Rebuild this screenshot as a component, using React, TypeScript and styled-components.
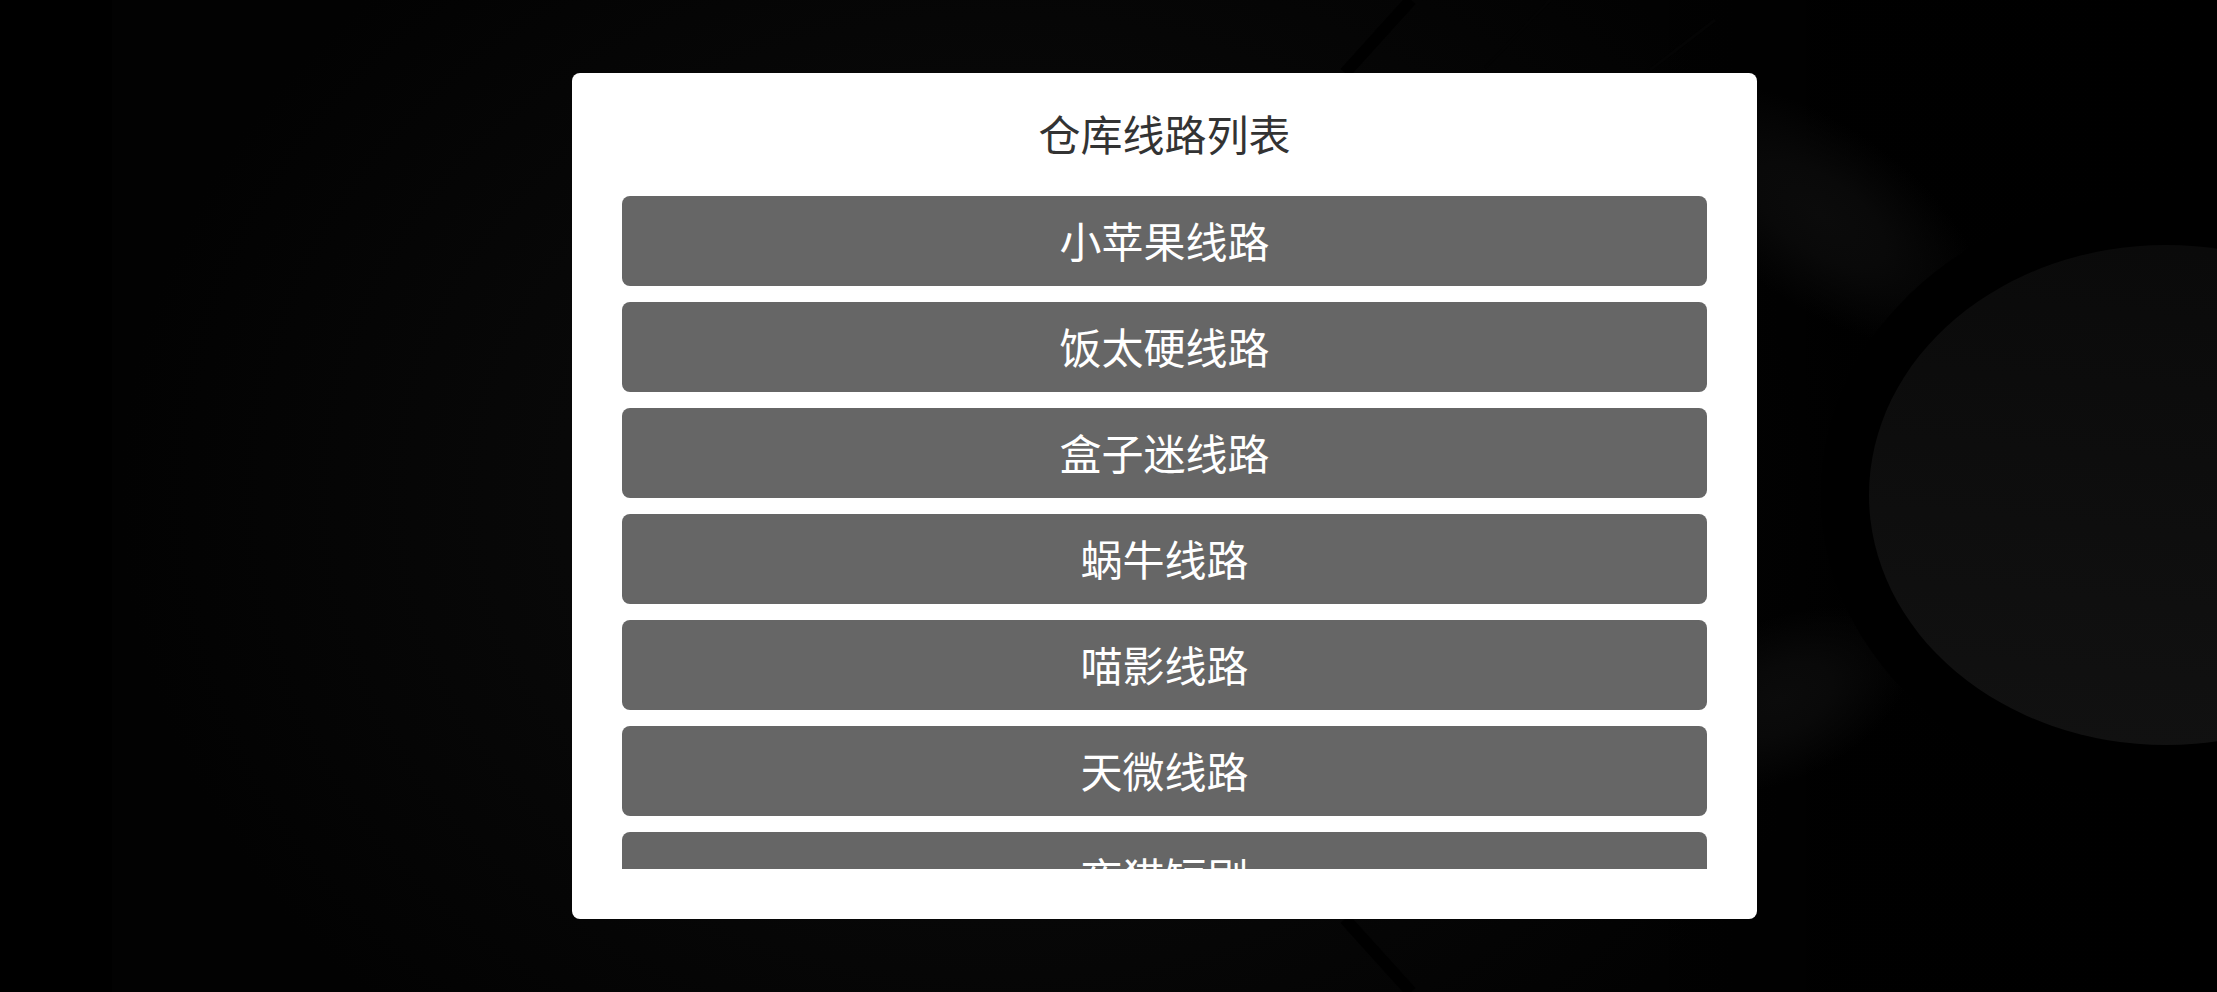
import styled, { createGlobalStyle } from "styled-components";

const lines = [
  "小苹果线路",
  "饭太硬线路",
  "盒子迷线路",
  "蜗牛线路",
  "喵影线路",
  "天微线路",
  "夜猫短剧",
];

const GlobalStyle = createGlobalStyle`
  * { box-sizing: border-box; margin: 0; }
  body {
    background: #000;
    font-family: "Noto Sans CJK SC", sans-serif;
    overflow: hidden;
  }
`;

const Screen = styled.main`
  position: relative;
  height: 100vh;
  padding: 73px 0 73px 112px;
  display: flex; justify-content: center;
`;

const Wallpaper = styled.svg`
  position: absolute; inset: 0; z-index: -1;
  width: 100%; height: 100%;
`;

const Dialog = styled.section`
  width: 56.3%;
  padding: 30px 50px 50px;
  display: flex; flex-direction: column;
  background: #fff;
  border-radius: 8px;
`;

const Title = styled.h1`
  margin-bottom: 33px;
  color: #333;
  font-size: 42px; font-weight: 400; line-height: 60px;
  text-align: center;
`;

const List = styled.ul`
  flex: 1; min-height: 0;
  padding: 0;
  display: flex; flex-direction: column; gap: 16px;
  list-style: none;
  overflow-y: auto;
  scrollbar-width: none;
`;

const LineButton = styled.button`
  display: block;
  width: 100%; height: 90px;
  padding: 0 0 2px;
  border: 0; border-radius: 8px;
  background: #666;
  color: #fff;
  font-family: inherit; font-size: 42px; line-height: 60px;
  cursor: pointer;
  &:hover { background: #5c5c5c; }
`;

function Background() {
  return (
    <Wallpaper viewBox="0 0 2217 992" preserveAspectRatio="none" aria-hidden="true">
      <defs>
        <radialGradient id="glow" gradientUnits="userSpaceOnUse" cx="0" cy="0" r="1" gradientTransform="translate(1000 496) scale(880 720)">
          <stop offset="0" stopColor="#0b0b0b" />
          <stop offset="0.5" stopColor="#080808" />
          <stop offset="1" stopColor="#020202" />
        </radialGradient>
        <linearGradient id="shade" x1="0" y1="0" x2="1" y2="0">
          <stop offset="0" stopColor="#000" stopOpacity="0" />
          <stop offset="0.4" stopColor="#000" stopOpacity="0.9" />
          <stop offset="1" stopColor="#000" />
        </linearGradient>
        <radialGradient id="sheen">
          <stop offset="0" stopColor="#0b0b0b" />
          <stop offset="0.4" stopColor="#090909" />
          <stop offset="1" stopColor="#090909" stopOpacity="0" />
        </radialGradient>
        <linearGradient id="disc" x1="0.5" y1="0" x2="0.4" y2="1">
          <stop offset="0" stopColor="#0a0a0a" />
          <stop offset="1" stopColor="#111" />
        </linearGradient>
      </defs>
      <rect width="2217" height="992" fill="#000" />
      <rect x="112" width="2105" height="992" fill="url(#glow)" />
      <rect x="1600" width="617" height="992" fill="url(#shade)" />
      <ellipse cx="1820" cy="215" rx="190" ry="90" fill="url(#sheen)" transform="rotate(35 1820 215)" />
      <ellipse cx="1780" cy="700" rx="140" ry="80" fill="url(#sheen)" transform="rotate(-25 1780 700)" />
      <path d="M1411 0L1345 73M1345 919L1411 992" stroke="#000" strokeWidth="12" />
      <path d="M1550 0L1485 68M1715 20L1650 70" stroke="#040404" strokeWidth="3" />
      <ellipse cx="2166" cy="495" rx="345" ry="300" fill="#000" />
      <ellipse cx="2166" cy="495" rx="297" ry="250" fill="url(#disc)" />
    </Wallpaper>
  );
}

export default function App() {
  return (
    <>
      <GlobalStyle />
      <Screen>
        <Background />
        <Dialog role="dialog" aria-labelledby="dialog-title">
          <Title id="dialog-title">仓库线路列表</Title>
          <List>
            {lines.map((name) => (
              <li key={name}>
                <LineButton type="button">{name}</LineButton>
              </li>
            ))}
          </List>
        </Dialog>
      </Screen>
    </>
  );
}
